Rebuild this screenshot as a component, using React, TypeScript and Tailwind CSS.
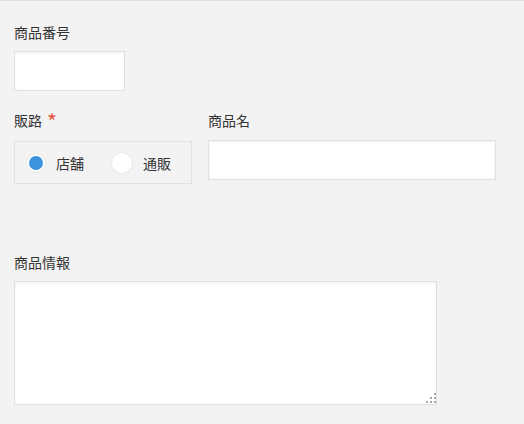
import React from "react"

const font = { fontFamily: '"Noto Sans CJK JP", "Noto Sans", sans-serif' }

function Label({ children }: { children: React.ReactNode }) {
  return <div className="text-[14px] leading-5 text-[#333]">{children}</div>
}

function Radio({ checked, label }: { checked?: boolean; label: string }) {
  return (
    <label className="flex items-center gap-[11px] cursor-pointer">
      {checked ? (
        <span className="w-[18px] h-[18px] rounded-full bg-[#3b93dd] border-2 border-white shadow-[0_0_2px_rgba(0,0,0,0.15)]" />
      ) : (
        <span className="w-[20px] h-[20px] rounded-full bg-white shadow-[0_0_2px_rgba(0,0,0,0.12)]" />
      )}
      <span className="text-[14px] leading-5 text-[#333]">{label}</span>
    </label>
  )
}

// dotted resize grip like the reference
function Grip() {
  const dots = [
    [8, 0],
    [4, 4], [8, 4],
    [0, 8], [4, 8], [8, 8],
  ]
  return (
    <svg className="absolute right-[1px] bottom-[2px]" width="10" height="10" viewBox="0 0 10 10">
      {dots.map(([x, y], i) => (
        <rect key={i} x={x} y={y} width="2" height="2" fill="#a8a8a8" />
      ))}
    </svg>
  )
}

export default function App() {
  return (
    <div
      className="w-[524px] h-[424px] bg-[#f3f3f3] border-t border-[#dedede] pl-[14px] pt-[21px]"
      style={font}
    >
      <Label>商品番号</Label>
      <input className="mt-[9px] block w-[111px] h-[40px] bg-white border border-[#e0e0e0] shadow-[inset_0_1px_3px_rgba(0,0,0,0.06)] outline-none" />

      <div className="mt-[19px] flex gap-[16px] items-start">
        <div>
          <div className="flex items-center">
            <Label>販路</Label>
            <span className="relative top-[1px] ml-[5px] text-[21px] leading-5 text-[#e5533d]">*</span>
          </div>
          <div className="mt-[11px] w-[178px] h-[43px] border border-[#e2e2e2] flex items-center pl-[12px] gap-[28px]">
            <Radio checked label="店舗" />
            <Radio label="通販" />
          </div>
        </div>
        <div>
          <Label>商品名</Label>
          <input className="mt-[10px] block w-[288px] h-[40px] bg-white border border-[#e0e0e0] shadow-[inset_0_1px_3px_rgba(0,0,0,0.06)] outline-none" />
        </div>
      </div>

      <div className="mt-[68px]">
        <Label>商品情報</Label>
        <div className="relative mt-[9px] w-[423px] h-[124px]">
          <textarea className="block w-full h-full bg-white border border-[#e0e0e0] shadow-[inset_0_1px_3px_rgba(0,0,0,0.06)] outline-none resize-none" />
          <Grip />
        </div>
      </div>
    </div>
  )
}
